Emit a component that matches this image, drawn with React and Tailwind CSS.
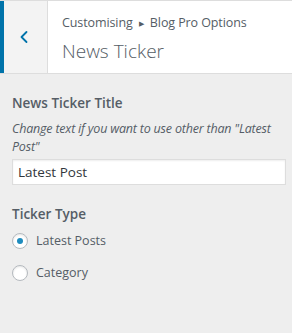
import { ChevronLeft } from 'lucide-react';

const font = { fontFamily: '"Open Sans", "Noto Sans", sans-serif' };

const Radio = ({ checked, label }) => (
  <label className="flex items-center h-[18px] text-[12.5px] text-[#555d66]">
    <span className="w-4 h-4 rounded-full border border-[#b4b9be] bg-white shadow-[inset_0_1px_2px_rgba(0,0,0,0.1)] flex items-center justify-center mr-[8px]">
      {checked && <span className="w-[6px] h-[6px] rounded-full bg-[#1e8cbe]" />}
    </span>
    {label}
  </label>
);

export default function App() {
  return (
    <div className="w-[292px] h-[333px] bg-[#eeeeee] overflow-hidden" style={font}>
      {/* Header */}
      <div className="flex h-[74px] bg-white border-t border-b border-[#dddddd]">
        <div className="w-[48px] shrink-0 border-l-4 border-[#0073aa] border-r border-r-[#dddddd] bg-[#f3f3f3] flex items-center justify-center">
          <ChevronLeft className="w-5 h-5 text-[#0073aa] -ml-[4px]" strokeWidth={2.2} />
        </div>
        <div className="pl-[14px] pt-[12px]">
          <div className="text-[12.5px] leading-[20px] text-[#555d66] tracking-[-0.1px]">
            Customising <span className="text-[7px] align-middle mx-[3px]">▶</span> Blog Pro Options
          </div>
          <div className="text-[19px] leading-[28px] font-light text-[#555d66] mt-[3px]">News Ticker</div>
        </div>
      </div>

      {/* Body */}
      <div className="pl-[12px] pr-[6px] pt-[19px]">
        <div className="text-[13.5px] font-semibold leading-[20px] text-[#555d66]">News Ticker Title</div>
        <div className="text-[12.5px] italic leading-[18px] text-[#555d66] mt-[7px] tracking-[-0.2px]">
          Change text if you want to use other than "Latest Post"
        </div>
        <input
          readOnly
          value="Latest Post"
          className="mt-[3px] w-full h-[26px] px-[5px] text-[13.5px] text-[#32373c] bg-white border border-[#dddddd] shadow-[inset_0_1px_2px_rgba(0,0,0,0.07)] outline-none"
          style={font}
        />
        <div className="text-[13.5px] font-semibold leading-[20px] text-[#555d66] mt-[19px]">Ticker Type</div>
        <div className="mt-[8px] flex flex-col gap-[14px]">
          <Radio checked label="Latest Posts" />
          <Radio label="Category" />
        </div>
      </div>
    </div>
  );
}
